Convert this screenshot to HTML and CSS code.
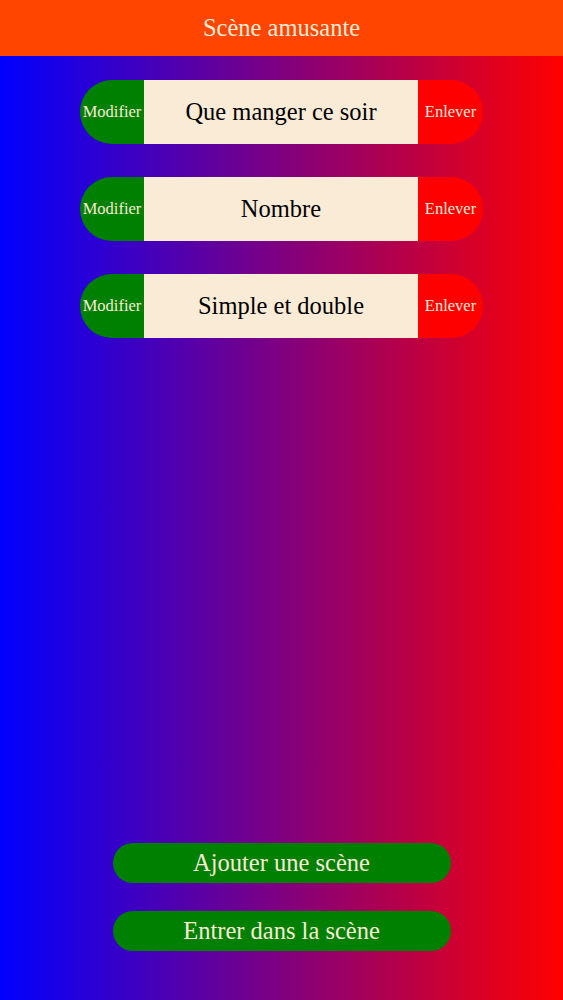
FILE: index.html
```html
<!DOCTYPE html>
<html lang="fr">
<head>
	<meta charset="UTF-8">
	<title>Scène amusante</title>
	<meta name="viewport" content="width=device-width">
	<link rel="stylesheet" href="styles.css">
</head>
<body>
	<div class="page">
		<header class="top">Scène amusante</header>

		<ul class="scenes">
			<li class="scene">
				<button class="edit">Modifier</button>
				<span class="name">Que manger ce soir</span>
				<button class="remove">Enlever</button>
			</li>
			<li class="scene">
				<button class="edit">Modifier</button>
				<span class="name">Nombre</span>
				<button class="remove">Enlever</button>
			</li>
			<li class="scene">
				<button class="edit">Modifier</button>
				<span class="name">Simple et double</span>
				<button class="remove">Enlever</button>
			</li>
		</ul>

		<div class="actions">
			<button class="action">Ajouter une scène</button>
			<button class="action">Entrer dans la scène</button>
		</div>
	</div>
</body>
</html>
```

FILE: styles.css
```css
* {
	list-style: none;
	padding: 0;
	margin: 0;
	box-sizing: border-box;
}

body {
	font-family: "Liberation Serif", "Times New Roman", serif;
}

button {
	font-family: inherit;
	border: 0;
	cursor: pointer;
}

.page {
	display: flex;
	flex-direction: column;
	height: 1000px;
	background: linear-gradient(to right, #0000ff, #ff0000);
}

.top {
	height: 56px;
	line-height: 56px;
	text-align: center;
	background: #ff4500;
	color: #faebd7;
	font-size: 24.5px;
}

.scenes {
	display: flex;
	flex-direction: column;
	align-items: center;
	gap: 33px;
	padding-top: 24px;
}

.scene {
	display: flex;
	width: 403px;
	height: 64px;
}

.scene .edit,
.scene .remove {
	width: 64px;
	padding: 0;
	font-size: 16.5px;
	color: #faebd7;
}

.scene .edit {
	background: #008000;
	border-radius: 32px 0 0 32px;
}

.scene .remove {
	width: 65px;
	background: #ff0000;
	border-radius: 0 32px 32px 0;
}

.scene .name {
	flex: 1;
	display: flex;
	align-items: center;
	justify-content: center;
	background: #faebd7;
	color: #000;
	font-size: 24.5px;
}

.actions {
	margin-top: auto;
	display: flex;
	flex-direction: column;
	align-items: center;
	gap: 28px;
	padding-bottom: 49px;
}

.action {
	width: 338px;
	height: 40px;
	border-radius: 20px;
	background: #008000;
	color: #faebd7;
	font-size: 24.5px;
}
```
